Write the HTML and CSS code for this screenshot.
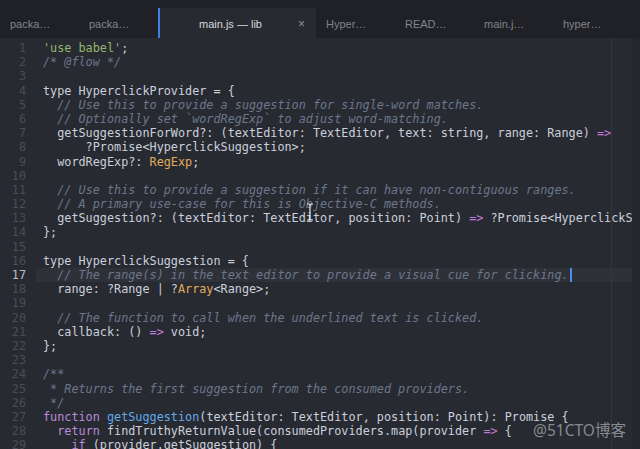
FILE: index.html
```html
<!DOCTYPE html>
<html lang="en">
<head>
<meta charset="utf-8">
<title>main.js — lib</title>
<link rel="stylesheet" href="styles.css">
</head>
<body>
<div class="window">
  <div class="tabbar">
    <div class="tab">packa…</div>
    <div class="tab">packa…</div>
    <div class="tab active"><span class="tab-title">main.js — lib</span><span class="tab-close">×</span></div>
    <div class="tab">Hyper…</div>
    <div class="tab">READ…</div>
    <div class="tab">main.j…</div>
    <div class="tab">hyper…</div>
  </div>
  <div class="editor">
    <div class="gutter">
      <div class="ln">1</div><div class="ln">2</div><div class="ln">3</div><div class="ln">4</div><div class="ln">5</div><div class="ln">6</div><div class="ln">7</div><div class="ln">8</div><div class="ln">9</div><div class="ln">10</div><div class="ln">11</div><div class="ln">12</div><div class="ln">13</div><div class="ln">14</div><div class="ln">15</div><div class="ln">16</div><div class="ln cur">17</div><div class="ln">18</div><div class="ln">19</div><div class="ln">20</div><div class="ln">21</div><div class="ln">22</div><div class="ln">23</div><div class="ln">24</div><div class="ln">25</div><div class="ln">26</div><div class="ln">27</div><div class="ln">28</div><div class="ln">29</div>
    </div>
    <div class="code">
      <div class="wrap-guide"></div>
      <div class="line"><span class="s">'use babel'</span>;</div>
      <div class="line"><span class="c">/* @flow */</span></div>
      <div class="line"> </div>
      <div class="line">type HyperclickProvider = {</div>
      <div class="line">  <span class="c">// Use this to provide a suggestion for single-word matches.</span></div>
      <div class="line">  <span class="c">// Optionally set `wordRegExp` to adjust word-matching.</span></div>
      <div class="line">  getSuggestionForWord?: (textEditor: TextEditor, text: string, range: Range) <span class="op">=&gt;</span></div>
      <div class="line">      ?Promise&lt;HyperclickSuggestion&gt;;</div>
      <div class="line">  wordRegExp?: <span class="t">RegExp</span>;</div>
      <div class="line"> </div>
      <div class="line">  <span class="c">// Use this to provide a suggestion if it can have non-contiguous ranges.</span></div>
      <div class="line">  <span class="c">// A primary use-case for this is Objective-C methods.</span></div>
      <div class="line">  getSuggestion?: (textEditor: TextEditor, position: Point) <span class="op">=&gt;</span> ?Promise&lt;HyperclickSuggestion&gt;;</div>
      <div class="line">};</div>
      <div class="line"> </div>
      <div class="line">type HyperclickSuggestion = {</div>
      <div class="line cur">  <span class="c">// The range(s) in the text editor to provide a visual cue for clicking.</span><span class="caret"></span></div>
      <div class="line">  range: ?Range | ?<span class="t">Array</span>&lt;Range&gt;;</div>
      <div class="line"> </div>
      <div class="line">  <span class="c">// The function to call when the underlined text is clicked.</span></div>
      <div class="line">  callback: () <span class="op">=&gt;</span> void;</div>
      <div class="line">};</div>
      <div class="line"> </div>
      <div class="line"><span class="c">/**</span></div>
      <div class="line"><span class="c"> * Returns the first suggestion from the consumed providers.</span></div>
      <div class="line"><span class="c"> */</span></div>
      <div class="line"><span class="k">function</span> <span class="f">getSuggestion</span>(textEditor: TextEditor, position: Point): Promise {</div>
      <div class="line">  <span class="k">return</span> findTruthyReturnValue(consumedProviders.map(provider <span class="op">=&gt;</span> {</div>
      <div class="line">    <span class="k">if</span> (provider.getSuggestion) {</div>
      <svg class="ibeam" width="8" height="18" viewBox="0 0 8 18"><path d="M1 1h2l1 1 1-1h2M4 2v14M1 17h2l1-1 1 1h2" fill="none" stroke="#e8e8e8" stroke-width="1.2"/></svg>
    </div>
    <div class="vscroll"></div>
  </div>
  <div class="watermark">@51CTO博客</div>
</div>
</body>
</html>
```

FILE: styles.css
```css
html, body {
  margin: 0;
  padding: 0;
  background: #282a31;
  overflow: hidden;
}

.window {
  position: relative;
  width: 640px;
  height: 449px;
  display: flex;
  flex-direction: column;
  overflow: hidden;
}

.tabbar {
  height: 30px;
  padding-top: 8px;
  display: flex;
  background: #1f2126;
  font-family: "Liberation Sans", Arial, sans-serif;
  font-size: 11px;
  flex: none;
}

.tab {
  width: 69px;
  height: 27px;
  padding-left: 10px;
  padding-top: 3px;
  line-height: 27px;
  color: #80848c;
  white-space: nowrap;
  overflow: hidden;
}

.tab.active {
  width: 156px;
  padding-left: 0;
  border-left: 2px solid #3f7fe0;
  background: #282a31;
  color: #d6d9df;
  display: flex;
  align-items: center;
  justify-content: flex-end;
  gap: 36px;
}

.tab-close {
  color: #8a8e96;
  font-size: 12px;
  margin-right: 11px;
}

.editor {
  flex: 1;
  display: flex;
  min-height: 0;
  font-family: "DejaVu Sans Mono", monospace;
  font-size: 11.8px;
  line-height: 14.2px;
}

.gutter {
  width: 26px;
  padding-right: 10px;
  padding-top: 3px;
  text-align: right;
  color: #494d56;
  flex: none;
}

.ln {
  height: 14.2px;
}

.ln.cur {
  color: #b9bdc6;
}

.code {
  position: relative;
  flex: 1;
  min-width: 0;
  padding-top: 3px;
  overflow: hidden;
  color: #cad0dc;
}

.line {
  height: 14.2px;
  padding-left: 7px;
  white-space: pre;
}

.line.cur {
  background: #2f3139;
}

.wrap-guide {
  position: absolute;
  top: 0;
  bottom: 0;
  left: 575px;
  width: 1px;
  background: #34363e;
}

.c {
  color: #6b778c;
  font-style: italic;
}

.s {
  color: #97b66f;
}

.k {
  color: #b88ad8;
}

.f {
  color: #62abec;
}

.t {
  color: #e2aa5c;
}

.op {
  color: #c07ad6;
}

.caret {
  display: inline-block;
  width: 2px;
  height: 14px;
  vertical-align: top;
  background: #4c8df0;
  margin-left: 1px;
}

.ibeam {
  position: absolute;
  left: 270px;
  top: 165px;
}

.vscroll {
  width: 8px;
  flex: none;
  background: #24262c;
}

.watermark {
  position: absolute;
  left: 533px;
  top: 418px;
  font-family: "Noto Sans", "Noto Sans CJK SC", sans-serif;
  font-size: 15.5px;
  color: rgba(200, 203, 210, 0.6);
  white-space: nowrap;
}
```
